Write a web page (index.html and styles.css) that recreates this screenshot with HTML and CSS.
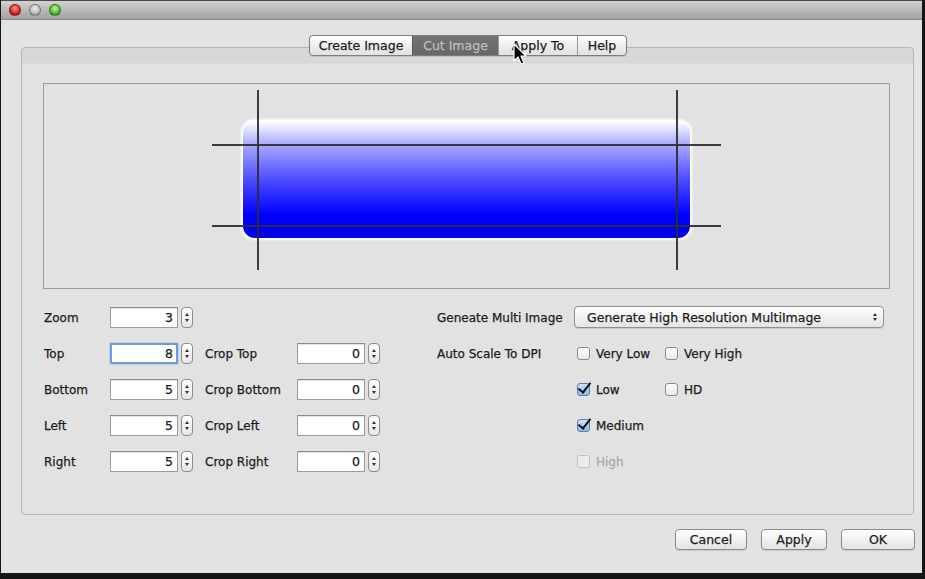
FILE: index.html
```html
<!DOCTYPE html>
<html>
<head>
<meta charset="utf-8">
<link rel="stylesheet" href="styles.css">
</head>
<body>
<div class="window">
  <div class="titlebar">
    <span class="light red"></span>
    <span class="light grey"></span>
    <span class="light green"></span>
  </div>
  <div class="content">
    <div class="tabs-row">
      <div class="tabs">
        <div class="tab t1">Create Image</div>
        <div class="tab t2 selected">Cut Image</div>
        <div class="tab t3">Apply To</div>
        <div class="tab t4">Help</div>
      </div>
    </div>
    <div class="box">
      <div class="preview">
        <svg class="canvas" width="845" height="204" viewBox="0 0 845 204">
          <defs>
            <linearGradient id="blue" x1="0" y1="0" x2="0" y2="1">
              <stop offset="0" stop-color="#ffffff"/>
              <stop offset="0.2" stop-color="#a9a9ff"/>
              <stop offset="0.5" stop-color="#4d4dff"/>
              <stop offset="0.8" stop-color="#0000ff"/>
              <stop offset="1" stop-color="#0000e6"/>
            </linearGradient>
            <filter id="glow" x="-5%" y="-10%" width="110%" height="120%">
              <feGaussianBlur stdDeviation="1.2"/>
            </filter>
          </defs>
          <rect x="197" y="35" width="451" height="121" rx="13" fill="#ffffff" filter="url(#glow)"/>
          <rect x="199" y="37" width="447" height="117" rx="12" fill="url(#blue)"/>
          <g stroke="#2e2e2e" stroke-width="2" stroke-opacity="0.92">
            <line x1="214" y1="6" x2="214" y2="186"/>
            <line x1="633" y1="6" x2="633" y2="186"/>
            <line x1="168" y1="61" x2="677" y2="61"/>
            <line x1="168" y1="142" x2="677" y2="142"/>
          </g>
        </svg>
      </div>
      <div class="form">
        <div class="left">
          <div class="row">
            <span class="label l1">Zoom</span>
            <span class="field"><span class="input">3</span><span class="spin"><i class="up"></i><i class="down"></i></span></span>
          </div>
          <div class="row">
            <span class="label l1">Top</span>
            <span class="field"><span class="input focus">8</span><span class="spin"><i class="up"></i><i class="down"></i></span></span>
            <span class="label l2">Crop Top</span>
            <span class="field"><span class="input">0</span><span class="spin"><i class="up"></i><i class="down"></i></span></span>
          </div>
          <div class="row">
            <span class="label l1">Bottom</span>
            <span class="field"><span class="input">5</span><span class="spin"><i class="up"></i><i class="down"></i></span></span>
            <span class="label l2">Crop Bottom</span>
            <span class="field"><span class="input">0</span><span class="spin"><i class="up"></i><i class="down"></i></span></span>
          </div>
          <div class="row">
            <span class="label l1">Left</span>
            <span class="field"><span class="input">5</span><span class="spin"><i class="up"></i><i class="down"></i></span></span>
            <span class="label l2">Crop Left</span>
            <span class="field"><span class="input">0</span><span class="spin"><i class="up"></i><i class="down"></i></span></span>
          </div>
          <div class="row">
            <span class="label l1">Right</span>
            <span class="field"><span class="input">5</span><span class="spin"><i class="up"></i><i class="down"></i></span></span>
            <span class="label l2">Crop Right</span>
            <span class="field"><span class="input">0</span><span class="spin"><i class="up"></i><i class="down"></i></span></span>
          </div>
        </div>
        <div class="right">
          <span class="label">Geneate Multi Image</span>
          <span class="select">Generate High Resolution MultiImage<span class="arrows"><i class="up"></i><i class="down"></i></span></span>
          <span class="label">Auto Scale To DPI</span>
          <span class="check"><span class="cb"></span>Very Low</span>
          <span class="check"><span class="cb"></span>Very High</span>
          <span class="label"></span>
          <span class="check"><span class="cb checked"></span>Low</span>
          <span class="check"><span class="cb"></span>HD</span>
          <span class="label"></span>
          <span class="check"><span class="cb checked"></span>Medium</span>
          <span class="empty"></span>
          <span class="label"></span>
          <span class="check disabled"><span class="cb"></span>High</span>
          <span class="empty"></span>
        </div>
      </div>
    </div>
    <div class="buttons">
      <span class="btn b-cancel">Cancel</span>
      <span class="btn b-apply">Apply</span>
      <span class="btn b-ok">OK</span>
    </div>
  </div>
  <svg class="cursor" width="16" height="24" viewBox="0 0 16 24">
    <path d="M1 1 L1 18 L5 14 L8 21 L11 20 L8 13 L13 13 Z" fill="#000" stroke="#fff" stroke-width="1.2" stroke-linejoin="round"/>
  </svg>
</div>
</body>
</html>
```

FILE: styles.css
```css
* { box-sizing: border-box; }
html, body { margin: 0; padding: 0; }
body {
  background: #151515;
  width: 925px;
  height: 579px;
  overflow: hidden;
  font-family: "DejaVu Sans", "Liberation Sans", sans-serif;
  font-size: 12px;
  color: #1c1c1c;
  -webkit-text-stroke: 0.25px currentColor;
}
.window {
  position: relative;
  width: 921px;
  height: 573px;
  margin-left: 1px;
  background: #e3e3e3;
  display: flex;
  flex-direction: column;
}
.titlebar {
  height: 20px;
  background: linear-gradient(#d2d2d2, #b4b4b4 60%, #a3a3a3);
  border-top: 1px solid #4a4a4a;
  border-bottom: 1px solid #8a8a8a;
  display: flex;
  align-items: center;
  padding-left: 8px;
  gap: 8px;
}
.light {
  width: 12px;
  height: 12px;
  border-radius: 50%;
  border: 1px solid rgba(0,0,0,0.35);
}
.red { background: radial-gradient(circle at 50% 35%, #ff9a9a, #d42020 60%, #9a0a0a); }
.grey { background: radial-gradient(circle at 50% 35%, #f0f0f0, #b8b8b8 60%, #8a8a8a); }
.green { background: radial-gradient(circle at 50% 35%, #c8f5a0, #4cb82a 60%, #2a7a14); }

.content {
  flex: 1;
  padding: 15px 8px 0 20px;
  display: flex;
  flex-direction: column;
}
.tabs-row {
  display: flex;
  justify-content: center;
  position: relative;
  z-index: 2;
  padding-left: 1px;
}
.tabs {
  display: flex;
  height: 21px;
  border: 1px solid #7d7d7d;
  border-radius: 4px;
  overflow: hidden;
  background: linear-gradient(#ffffff, #ececec 55%, #e2e2e2);
  box-shadow: 0 1px 1px rgba(0,0,0,0.12);
}
.tab {
  display: flex;
  align-items: center;
  justify-content: center;
  font-size: 12.5px;
  color: #1c1c1c;
  border-left: 1px solid #9a9a9a;
}
.tab.t1 { width: 102px; border-left: none; }
.tab.t2 { width: 86px; }
.tab.t3 { width: 79px; }
.tab.t4 { width: 49px; }
.tab.selected {
  background: linear-gradient(#737373, #676767);
  color: #bdbdbd;
  border-left-color: #555;
}
.box {
  margin-top: -9px;
  height: 468px;
  border: 1px solid #b6b6b6;
  border-radius: 4px;
  background: linear-gradient(#d7d7d7 0, #d7d7d7 15px, #e2e2e2 16px, #e2e2e2);
  padding: 35px 21px 0 21px;
}
.preview {
  width: 847px;
  height: 206px;
  border: 1px solid #9b9b9b;
  background: #e2e2e2;
}
.canvas { display: block; }

.form {
  margin-top: 18px;
  display: flex;
}
.left {
  width: 373px;
  display: flex;
  flex-direction: column;
  gap: 15px;
  padding-left: 1px;
}
.row {
  display: flex;
  height: 21px;
  align-items: center;
}
.label { white-space: nowrap; }
.l1 { width: 66px; }
.l2 { width: 92px; margin-left: 12px; }
.field { display: flex; align-items: center; gap: 3px; }
.input {
  width: 68px;
  height: 21px;
  border: 1px solid #9c9c9c;
  border-top-color: #8a8a8a;
  background: #fff;
  box-shadow: inset 0 1px 1px rgba(0,0,0,0.12);
  text-align: right;
  padding-right: 4px;
  line-height: 20px;
  font-size: 12.5px;
}
.input.focus {
  border: 2px solid #6f9ad8;
  box-shadow: 0 0 2px #8fb4e6;
  line-height: 17px;
  padding-right: 3px;
}
.spin {
  width: 12px;
  height: 21px;
  border: 1px solid #8d8d8d;
  border-radius: 4px;
  background: linear-gradient(#ffffff, #e6e6e6);
  display: flex;
  flex-direction: column;
  align-items: center;
  justify-content: center;
  gap: 3px;
}
i.up, i.down {
  display: block;
  width: 0;
  height: 0;
  border-left: 2.5px solid transparent;
  border-right: 2.5px solid transparent;
}
i.up { border-bottom: 3px solid #333; }
i.down { border-top: 3px solid #333; }

.right {
  margin-left: 21px;
  display: grid;
  grid-template-columns: 137px 88px 150px;
  grid-auto-rows: 21px;
  row-gap: 15px;
  align-items: center;
}
.select {
  grid-column: 2 / 4;
  width: 310px;
  height: 22px;
  margin-top: -1px;
  border: 1px solid #8f8f8f;
  border-radius: 4px;
  background: linear-gradient(#ffffff, #efefef 60%, #e4e4e4);
  box-shadow: 0 1px 1px rgba(0,0,0,0.12);
  display: flex;
  align-items: center;
  padding-left: 12px;
  padding-right: 6px;
  font-size: 12.5px;
}
.select .arrows {
  margin-left: auto;
  display: flex;
  flex-direction: column;
  gap: 2px;
}
.check {
  display: flex;
  align-items: center;
  white-space: nowrap;
  padding-left: 3px;
}
.cb {
  width: 13px;
  height: 13px;
  border: 1px solid #8b8b8b;
  border-radius: 3px;
  background: linear-gradient(#ffffff, #e8e8e8);
  margin-right: 6px;
  position: relative;
}
.cb.checked {
  background: linear-gradient(#cfe2f8, #8fb8e8);
  border-color: #5d7fa8;
}
.cb.checked::after {
  content: "";
  position: absolute;
  left: 3px;
  top: -4px;
  width: 5px;
  height: 11px;
  border-right: 2.5px solid #111;
  border-bottom: 2.5px solid #111;
  transform: rotate(38deg);
}
.check.disabled { color: #a8a8a8; }
.check.disabled .cb { border-color: #c2c2c2; background: #ececec; }

.buttons {
  margin-top: 14px;
  display: flex;
  justify-content: flex-end;
  gap: 14px;
  margin-right: -1px;
}
.btn {
  height: 21px;
  border: 1px solid #8a8a8a;
  border-radius: 4px;
  background: linear-gradient(#ffffff, #f0f0f0 55%, #e3e3e3);
  box-shadow: 0 1px 1px rgba(0,0,0,0.12);
  display: flex;
  align-items: center;
  justify-content: center;
  font-size: 12.5px;
}
.b-cancel { width: 72px; }
.b-apply { width: 66px; }
.b-ok { width: 74px; }

.cursor {
  position: absolute;
  left: 512px;
  top: 43px;
  z-index: 5;
}
```
